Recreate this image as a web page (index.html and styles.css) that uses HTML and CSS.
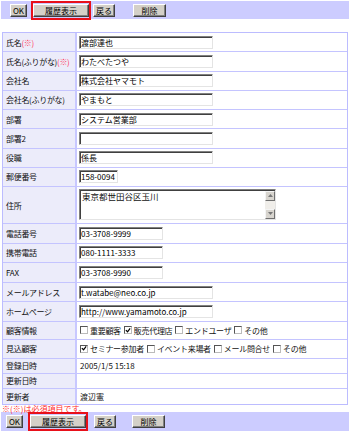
FILE: index.html
```html
<!DOCTYPE html>
<html lang="ja">
<head>
<meta charset="utf-8">
<title>顧客情報</title>
<link rel="stylesheet" href="styles.css">
</head>
<body>
<div class="toolbar toolbar-top">
  <button class="btn btn-ok">OK</button>
  <span class="hl"><button class="btn btn-hist">履歴表示</button></span>
  <button class="btn btn-back">戻る</button>
  <button class="btn btn-del">削除</button>
</div>

<div class="form">
  <div class="lab">氏名<span class="req">(※)</span></div>
  <div class="val"><input class="in w-l" value="渡部達也"></div>

  <div class="lab">氏名(ふりがな)<span class="req">(※)</span></div>
  <div class="val"><input class="in w-l" value="わたべたつや"></div>

  <div class="lab">会社名</div>
  <div class="val"><input class="in w-l" value="株式会社ヤマモト"></div>

  <div class="lab">会社名(ふりがな)</div>
  <div class="val"><input class="in w-l" value="やまもと"></div>

  <div class="lab">部署</div>
  <div class="val"><input class="in w-l" value="システム営業部"></div>

  <div class="lab">部署2</div>
  <div class="val"><input class="in w-l" value=""></div>

  <div class="lab">役職</div>
  <div class="val"><input class="in w-l" value="係長"></div>

  <div class="lab">郵便番号</div>
  <div class="val"><input class="in w-s" value="158-0094"></div>

  <div class="lab">住所</div>
  <div class="val">
    <div class="ta">
      <div class="ta-text">東京都世田谷区玉川</div>
      <div class="ta-sb">
        <span class="sb-btn"><svg width="5" height="3" viewBox="0 0 5 3"><path d="M0 3h5L2.5 0z" fill="#777"/></svg></span>
        <span class="sb-btn"><svg width="5" height="3" viewBox="0 0 5 3"><path d="M0 0h5L2.5 3z" fill="#777"/></svg></span>
      </div>
    </div>
  </div>

  <div class="lab">電話番号</div>
  <div class="val"><input class="in w-m" value="03-3708-9999"></div>

  <div class="lab">携帯電話</div>
  <div class="val"><input class="in w-m" value="080-1111-3333"></div>

  <div class="lab">FAX</div>
  <div class="val"><input class="in w-m" value="03-3708-9990"></div>

  <div class="lab">メールアドレス</div>
  <div class="val"><input class="in w-l" value="t.watabe@neo.co.jp"></div>

  <div class="lab">ホームページ</div>
  <div class="val"><input class="in w-l" value="http://www.yamamoto.co.jp"></div>

  <div class="lab">顧客情報</div>
  <div class="val checks">
    <span class="cb"></span><span class="ct">重要顧客</span>
    <span class="cb on"><svg width="7" height="7" viewBox="0 0 7 7"><path d="M1 3l2 2 3-4" stroke="#000" stroke-width="1.4" fill="none"/></svg></span><span class="ct">販売代理店</span>
    <span class="cb"></span><span class="ct">エンドユーザ</span>
    <span class="cb"></span><span class="ct">その他</span>
  </div>

  <div class="lab">見込顧客</div>
  <div class="val checks">
    <span class="cb on"><svg width="7" height="7" viewBox="0 0 7 7"><path d="M1 3l2 2 3-4" stroke="#000" stroke-width="1.4" fill="none"/></svg></span><span class="ct">セミナー参加者</span>
    <span class="cb"></span><span class="ct">イベント来場者</span>
    <span class="cb"></span><span class="ct">メール問合せ</span>
    <span class="cb"></span><span class="ct">その他</span>
  </div>

  <div class="lab">登録日時</div>
  <div class="val txt">2005/1/5 15:18</div>

  <div class="lab">更新日時</div>
  <div class="val txt"></div>

  <div class="lab">更新者</div>
  <div class="val txt">渡辺憲</div>
</div>

<div class="note">※(※)は必須項目です。</div>

<div class="toolbar toolbar-bottom">
  <button class="btn btn-ok">OK</button>
  <span class="hl"><button class="btn btn-hist">履歴表示</button></span>
  <button class="btn btn-back">戻る</button>
  <button class="btn btn-del">削除</button>
</div>
</body>
</html>
```

FILE: styles.css
```css
html, body {
  margin: 0;
  padding: 0;
  background: #fff;
}
body {
  width: 350px;
  height: 431px;
  overflow: hidden;
  font-family: "Noto Sans CJK JP", "Noto Sans", sans-serif;
  font-size: 8px;
  color: #111;
}

/* toolbars */
.toolbar {
  display: flex;
  align-items: center;
  background: #ccccff;
  margin: 0 1px;
}
.toolbar-top {
  margin-top: 1px;
  height: 18px;
  padding-left: 9px;
}
.toolbar-bottom {
  height: 20px;
  padding-left: 5px;
}

.btn {
  box-sizing: border-box;
  height: 13px;
  padding: 0;
  margin: 0;
  font-family: "Noto Sans CJK JP", sans-serif;
  font-size: 8px;
  line-height: 11px;
  color: #000;
  background: #d4d0c8;
  border: 1px solid;
  border-color: #fff #404040 #404040 #fff;
  box-shadow: inset -1px -1px 0 #808080;
  text-align: center;
}
.btn-ok { width: 17px; }
.btn-hist { width: 56px; display: block; }
.btn-back { width: 22px; }
.btn-del { width: 33px; }

.hl {
  display: inline-block;
  border: 2px solid #e8101a;
  padding: 1px 0;
}

.toolbar-top .hl { margin-left: 4px; }
.toolbar-top .btn-back { margin-left: 2px; }
.toolbar-top .btn-del { margin-left: 18px; }

.toolbar-bottom .hl { margin-left: 5px; }
.toolbar-bottom .btn-back { margin-left: 6px; }
.toolbar-bottom .btn-del { margin-left: 16px; }

/* form grid */
.form {
  margin: 13px 2px 0;
  border: 1px solid #bcbcff;
  display: grid;
  grid-template-columns: 74px 1fr;
  grid-template-rows:
    19.25px 19.25px 19.25px 19.25px 19.25px 19.25px 19.25px 19.25px
    37px
    19.6px 19.6px 19.6px 19.6px 19.6px
    18px 19px 15px 15px 15px;
}
.lab, .val {
  box-sizing: border-box;
  border-bottom: 1px solid #c4c4ff;
  display: flex;
  align-items: center;
  min-width: 0;
}
.lab:nth-last-child(2), .val:last-child { border-bottom: 0; }
.lab {
  background: #ececfa;
  border-right: 2px solid #c8c8ff;
  padding-left: 3px;
  white-space: nowrap;
  letter-spacing: -0.3px;
}
.req { color: #ff3b5c; }
.val {
  padding-left: 2px;
  white-space: nowrap;
}
.txt { font-size: 8px; padding-left: 3px; }

/* inputs */
.in {
  box-sizing: border-box;
  height: 13px;
  margin: 0;
  padding: 0 1px;
  font-family: "Noto Sans CJK JP", sans-serif;
  font-size: 8px;
  color: #000;
  background: #fff;
  border: 1px solid;
  border-color: #808080 #e4e4e4 #e4e4e4 #808080;
  box-shadow: inset 1px 1px 0 #404040;
  outline: none;
}
.w-l { width: 134px; }
.w-m { width: 84px; }
.w-s { width: 39px; }

/* textarea mock */
.ta {
  box-sizing: border-box;
  width: 197px;
  height: 31px;
  display: flex;
  border: 1px solid;
  border-color: #808080 #e4e4e4 #e4e4e4 #808080;
  box-shadow: inset 1px 1px 0 #404040;
  margin-top: -2px;
}
.ta-text {
  flex: 1;
  padding: 1px 2px 0;
  font-size: 8.5px;
  line-height: 10px;
}
.ta-sb {
  width: 10px;
  display: flex;
  flex-direction: column;
  justify-content: space-between;
  background: #f0eeea;
  margin: 1px 0 0;
}
.sb-btn {
  box-sizing: border-box;
  height: 10px;
  display: flex;
  align-items: center;
  justify-content: center;
  background: #d8d5cf;
  border: 1px solid;
  border-color: #f4f4f4 #707070 #707070 #f4f4f4;
}

/* checkboxes */
.checks {
  font-size: 8px;
  padding-left: 3px;
  letter-spacing: -0.3px;
}
.cb {
  box-sizing: border-box;
  width: 8px;
  height: 8px;
  display: inline-flex;
  align-items: center;
  justify-content: center;
  border: 1px solid;
  border-color: #555 #bbb #bbb #555;
  background: #fff;
  margin-right: 2px;
}
.ct { margin-right: 3px; }

.note {
  margin: 0 0 0 2px;
  height: 7px;
  line-height: 7px;
  font-size: 8px;
  color: #ff2a2a;
  white-space: nowrap;
}
```
